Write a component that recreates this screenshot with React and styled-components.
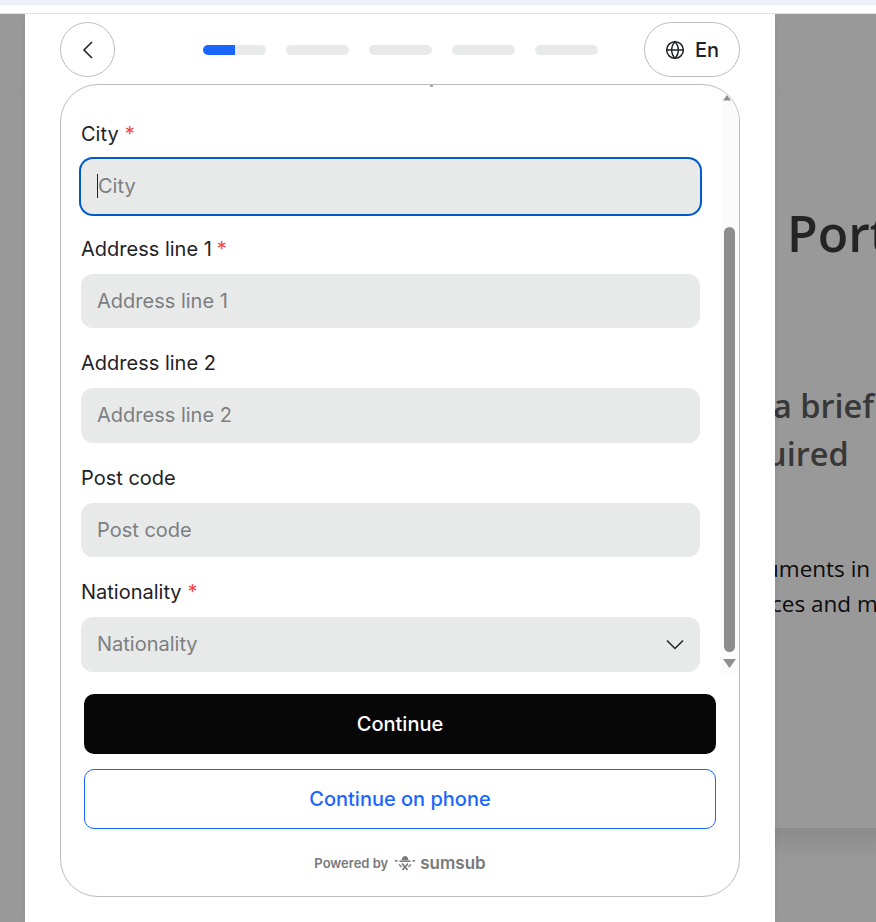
import React from 'react'
import styled, { createGlobalStyle } from 'styled-components'
import { Globe } from 'lucide-react'

const GlobalStyle = createGlobalStyle`
    html, body {
        margin: 0;
        padding: 0;
        background: #fff;
        overflow: hidden;
    }
    * {
        box-sizing: border-box;
    }
`

const Screen = styled.div`
    width: 876px;
    height: 922px;
    display: flex;
    flex-direction: column;
    overflow: hidden;
`

const BrowserStrip = styled.div`
    height: 14px;
    flex-shrink: 0;
    background: #fff;
    border-top: 5px solid #ebf0f9;
    border-bottom: 1px solid #e2e3e4;
`

const Stage = styled.div`
    position: relative;
    flex: 1;
    background: #999999;
    overflow: hidden;
`

const PageHeader = styled.div`
    height: 81px;
    border-bottom: 1px solid #959595;
`

const PageBody = styled.div`
    height: 733px;
    padding-top: 108px;
    display: flex;
    flex-direction: column;
    font-family: "Open Sans", "Noto Sans", sans-serif;
    white-space: nowrap;
`

const PageEdge = styled.div`
    height: 32px;
    margin-left: 775px;
    background: linear-gradient(#8b8b8b, #999999);
`

const PageTitle = styled.div`
    margin-left: 787px;
    font-size: 50px;
    line-height: 60px;
    font-weight: 600;
    color: #242424;
    margin-bottom: 119px;
`

const PageLead = styled.div`
    margin-left: ${(p) => p.$indent}px;
    font-size: 32.5px;
    line-height: 48px;
    font-weight: 600;
    color: #383838;
`

const PageText = styled.div`
    margin-left: ${(p) => p.$indent}px;
    font-size: 22.5px;
    line-height: 35px;
    color: #0c0c0c;
    margin-top: ${(p) => p.$top || 0}px;
`

const Modal = styled.div`
    position: absolute;
    top: 0;
    bottom: 0;
    left: 25px;
    width: 750px;
    padding: 8px 35px 25px;
    background: #fff;
    box-shadow: 0 0 6px rgba(0, 0, 0, 0.08);
    display: flex;
    flex-direction: column;
    gap: 7px;
    font-family: Inter, "Liberation Sans", sans-serif;
    color: #1f2227;
`

const TopBar = styled.div`
    height: 55px;
    flex-shrink: 0;
    display: flex;
    align-items: center;
`

const BackButton = styled.button`
    width: 55px;
    height: 55px;
    padding: 0;
    border: 1px solid #bdbdbd;
    border-radius: 50%;
    background: #fff;
    display: flex;
    align-items: center;
    justify-content: center;
    cursor: pointer;
`

const Steps = styled.div`
    display: flex;
    gap: 20px;
    margin-left: 88px;
`

const Step = styled.div`
    width: 63px;
    height: 10px;
    border-radius: 5px;
    background: #e8e9e9;
    overflow: hidden;
`

const StepFill = styled.div`
    height: 100%;
    background: #1a66ff;
`

const LangButton = styled.button`
    width: 96px;
    height: 55px;
    margin-left: auto;
    padding: 0;
    border: 1px solid #bdbdbd;
    border-radius: 28px;
    background: #fff;
    display: flex;
    align-items: center;
    justify-content: center;
    gap: 10px;
    font-family: inherit;
    font-size: 20px;
    font-weight: 500;
    color: #1f2227;
    cursor: pointer;
`

const Card = styled.div`
    position: relative;
    flex: 1;
    border: 1px solid #bcbcbc;
    border-radius: 38px;
    overflow: hidden;
    display: flex;
    flex-direction: column;
`

const FormArea = styled.div`
    height: 589px;
    flex-shrink: 0;
    padding: 34px 39px 0 20px;
    display: flex;
    flex-direction: column;
    gap: 20px;
`

const Field = styled.div`
    display: flex;
    flex-direction: column;
    gap: 10px;
`

const Label = styled.label`
    height: 30px;
    font-size: 20px;
    line-height: 30px;
    color: #1f2227;
`

const Required = styled.span`
    color: #f04a4a;
    margin-left: ${(p) => p.$gap}px;
`

const InputBox = styled.div`
    height: 54.5px;
    padding: 0 16px;
    display: flex;
    align-items: center;
    background: #e8e9e9;
    border-radius: 12px;
    box-shadow: ${(p) => (p.$focused ? '0 0 0 2px #005ac8' : 'none')};
`

const Input = styled.input`
    flex: 1;
    min-width: 0;
    padding: 0;
    border: none;
    outline: none;
    background: transparent;
    font-family: inherit;
    font-size: 20px;
    color: #1f2227;

    &::placeholder {
        color: #7c7f82;
        opacity: 1;
    }
`

const Caret = styled.span`
    width: 1px;
    height: 24px;
    flex-shrink: 0;
    background: #1f2227;
`

const Tick = styled.div`
    position: absolute;
    top: 0;
    left: 369px;
    width: 3px;
    height: 2px;
    background: #a9a9a9;
`

const ScrollTrack = styled.div`
    position: absolute;
    top: 0;
    right: 0;
    width: 18px;
    height: 589px;
    background: #fbfbfb;
`

const ScrollThumb = styled.div`
    position: absolute;
    top: 142px;
    left: 3px;
    width: 11px;
    height: 425px;
    border-radius: 6px;
    background: #8d8d8d;
`

const ScrollArrow = styled.svg`
    position: absolute;
    left: ${(p) => p.$left}px;
    top: ${(p) => p.$top}px;
    width: ${(p) => p.$w}px;
    height: ${(p) => p.$h}px;
    fill: #8f8f8f;
`

const Actions = styled.div`
    padding: 20px 23px 0;
    display: flex;
    flex-direction: column;
    gap: 15px;
`

const PrimaryButton = styled.button`
    height: 60px;
    border: none;
    border-radius: 10px;
    background: #070707;
    color: #fff;
    font-family: inherit;
    font-size: 20px;
    font-weight: 500;
    cursor: pointer;
`

const OutlineButton = styled.button`
    height: 60px;
    border: 1px solid #1a66ff;
    border-radius: 10px;
    background: #fff;
    color: #1a66ff;
    font-family: inherit;
    font-size: 20px;
    font-weight: 500;
    cursor: pointer;
`

const PoweredBy = styled.div`
    flex: 1;
    display: flex;
    align-items: center;
    justify-content: center;
    padding-top: 1px;
    color: #77797c;
`

const PoweredText = styled.span`
    font-size: 13px;
    font-weight: 600;
    margin-right: 6px;
`

const BrandName = styled.span`
    margin-left: 4px;
    font-size: 17px;
    line-height: 20px;
    font-weight: 600;
`

const fields = [
  { name: 'City', required: true, gap: 6, focused: true },
  { name: 'Address line 1', required: true, gap: 5 },
  { name: 'Address line 2' },
  { name: 'Post code' },
  { name: 'Nationality', required: true, gap: 6, select: true },
]

const App = () => {
  return (
    <Screen>
      <GlobalStyle />
      <BrowserStrip />
      <Stage>
        <PageHeader />
        <PageBody>
          <PageTitle>Port</PageTitle>
          <PageLead $indent={773}>a brief</PageLead>
          <PageLead $indent={766}>uired</PageLead>
          <PageText $indent={765} $top={73}>uments in</PageText>
          <PageText $indent={771}>ces and m</PageText>
        </PageBody>
        <PageEdge />

        <Modal>
          <TopBar>
            <BackButton aria-label="Back">
              <svg width="12" height="18" viewBox="0 0 12 18" fill="none">
                <path d="M10 1 2 9l8 8" stroke="#1f2227" strokeWidth="1.6" />
              </svg>
            </BackButton>
            <Steps>
              <Step><StepFill style={{ width: '50%' }} /></Step>
              <Step />
              <Step />
              <Step />
              <Step />
            </Steps>
            <LangButton>
              <Globe size={20} strokeWidth={1.8} color="#1f2227" />
              En
            </LangButton>
          </TopBar>

          <Card>
            <Tick />
            <FormArea>
              {fields.map((f) => (
                <Field key={f.name}>
                  <Label>
                    {f.name}
                    {f.required && <Required $gap={f.gap}>*</Required>}
                  </Label>
                  <InputBox $focused={f.focused}>
                    {f.focused && <Caret />}
                    <Input placeholder={f.name} readOnly />
                    {f.select && (
                      <svg width="18" height="11" viewBox="0 0 18 11" fill="none">
                        <path d="m1 1.500 8 8 8-8" stroke="#1f2227" strokeWidth="1.5" />
                      </svg>
                    )}
                  </InputBox>
                </Field>
              ))}
            </FormArea>
            <ScrollTrack>
              <ScrollArrow $left={2} $top={10} $w={8} $h={5.5} viewBox="0 0 8 5.500"><path d="M4 0 8 5.500H0z" /></ScrollArrow>
              <ScrollThumb />
              <ScrollArrow $left={2} $top={574} $w={13} $h={9} viewBox="0 0 13 9"><path d="M0 0h13L6.500 9z" /></ScrollArrow>
            </ScrollTrack>
            <Actions>
              <PrimaryButton>Continue</PrimaryButton>
              <OutlineButton>Continue on phone</OutlineButton>
            </Actions>
            <PoweredBy>
              <PoweredText>Powered by</PoweredText>
              <svg width="22" height="17" viewBox="0 0 22 17" fill="none" stroke="#77797c">
                <path d="M7.500 5C8 2.200 9.500 1 11 1s3 1.200 3.500 4z" fill="#77797c" stroke="none" />
                <path d="M5.500 6.200h11" strokeWidth="1.600" />
                <path d="M8 8.500l5.500 6.500M14 8.500 8.500 15" strokeWidth="1.800" />
                <path d="M5 9.500 7.500 12M17 9.500 14.500 12" strokeWidth="1.400" />
                <path d="M1 5.500l2.500.8M21 5.500l-2.500.8" strokeWidth="1.500" />
              </svg>
              <BrandName>sumsub</BrandName>
            </PoweredBy>
          </Card>
        </Modal>
      </Stage>
    </Screen>
  )
}

export default App
